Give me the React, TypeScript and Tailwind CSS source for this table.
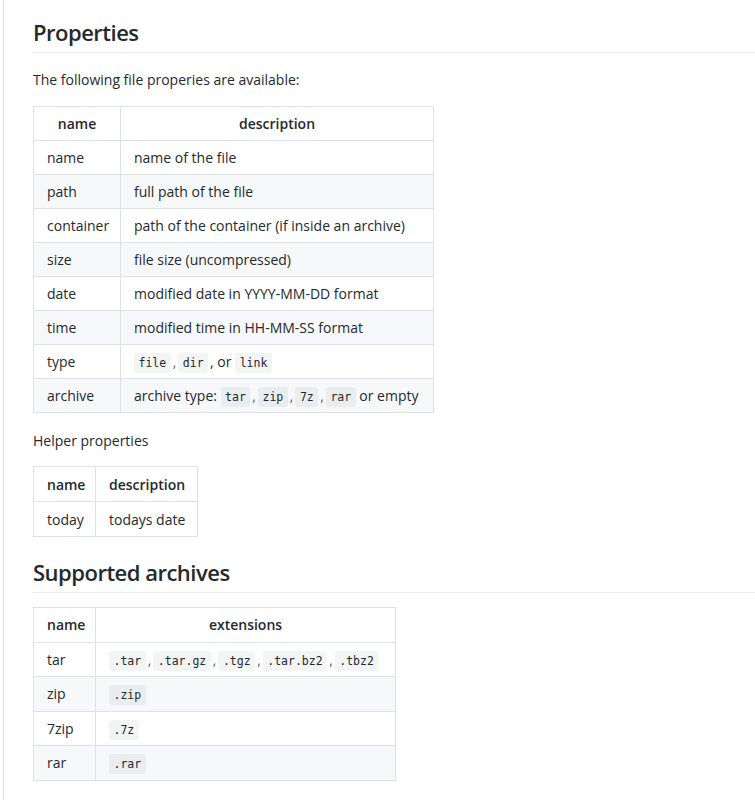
const font = "font-['Segoe_UI','Open_Sans','Noto_Sans',sans-serif]"

interface Row {
  name: string
  desc: React.ReactNode
}

function Code({ children }: { children: React.ReactNode }) {
  return (
    <code className="rounded-[3px] bg-[#1b1f230d] px-[4.5px] py-[3px] font-['DejaVu_Sans_Mono','Liberation_Mono',monospace] text-[11.5px]">
      {children}
    </code>
  )
}

function Sep() {
  return <span className="mx-[2px] text-[#586069]">,</span>
}

function DataTable({
  cols,
  tableWidth,
  firstCol,
  rowHeight,
  rows,
}: {
  cols: string[]
  tableWidth: string
  firstCol: string
  rowHeight: string
  rows: Row[]
}) {
  return (
    <table className={`${tableWidth} table-fixed border-collapse text-[14px]`}>
      <colgroup>
        <col className={firstCol} />
        <col />
      </colgroup>
      <thead>
        <tr>
          {cols.map((c) => (
            <th key={c} className={`${rowHeight} border border-[#dfe2e5] px-[13px] py-0 text-center font-semibold`}>
              {c}
            </th>
          ))}
        </tr>
      </thead>
      <tbody>
        {rows.map((r, i) => (
          <tr key={r.name} className={i % 2 === 1 ? "bg-[#f6f8fa]" : "bg-white"}>
            <td className={`${rowHeight} border border-[#dfe2e5] px-[13px] py-0 whitespace-nowrap`}>{r.name}</td>
            <td className="border border-[#dfe2e5] px-[13px] py-0 whitespace-nowrap">{r.desc}</td>
          </tr>
        ))}
      </tbody>
    </table>
  )
}

export default function App() {
  const props: Row[] = [
    { name: "name", desc: "name of the file" },
    { name: "path", desc: "full path of the file" },
    { name: "container", desc: "path of the container (if inside an archive)" },
    { name: "size", desc: "file size (uncompressed)" },
    { name: "date", desc: "modified date in YYYY-MM-DD format" },
    { name: "time", desc: "modified time in HH-MM-SS format" },
    {
      name: "type",
      desc: (
        <>
          <Code>file</Code>
          <Sep />
          <Code>dir</Code>
          <span className="ml-[2px]">, or </span>
          <Code>link</Code>
        </>
      ),
    },
    {
      name: "archive",
      desc: (
        <>
          archive type: <Code>tar</Code>
          <Sep />
          <Code>zip</Code>
          <Sep />
          <Code>7z</Code>
          <Sep />
          <Code>rar</Code> or empty
        </>
      ),
    },
  ]

  const archives: Row[] = [
    {
      name: "tar",
      desc: (
        <>
          <Code>.tar</Code>
          <Sep />
          <Code>.tar.gz</Code>
          <Sep />
          <Code>.tgz</Code>
          <Sep />
          <Code>.tar.bz2</Code>
          <Sep />
          <Code>.tbz2</Code>
        </>
      ),
    },
    { name: "zip", desc: <Code>.zip</Code> },
    { name: "7zip", desc: <Code>.7z</Code> },
    { name: "rar", desc: <Code>.rar</Code> },
  ]

  return (
    <div className={`${font} flex min-h-[800px] overflow-hidden bg-white text-[#24292e]`}>
      {/* left rule of the page frame */}
      <div className="ml-[3px] w-px shrink-0 bg-[#dcdfe3]" />
      <div className="min-w-0 flex-1 pl-[29px] pt-[18px]">
        <h2 className="border-b border-[#eaecef] pb-[5px] text-[22px] leading-[29px] font-semibold tracking-[-0.5px]">
          Properties
        </h2>

        <p className="mt-[16px] text-[14px] leading-[21px]">The following file properies are available:</p>

        <div className="mt-[16px]">
          <DataTable
            cols={["name", "description"]}
            tableWidth="w-[401px]"
            firstCol="w-[87px]"
            rowHeight="h-[34px]"
            rows={props}
          />
        </div>

        <p className="mt-[17px] text-[14px] leading-[21px]">Helper properties</p>

        <div className="mt-[15px]">
          <DataTable
            cols={["name", "description"]}
            tableWidth="w-[165px]"
            firstCol="w-[62px]"
            rowHeight="h-[35px]"
            rows={[{ name: "today", desc: "todays date" }]}
          />
        </div>

        <h2 className="mt-[21px] border-b border-[#eaecef] pb-[5px] text-[22px] leading-[29px] font-semibold tracking-[-0.5px]">
          Supported archives
        </h2>

        <div className="mt-[14px]">
          <DataTable
            cols={["name", "extensions"]}
            tableWidth="w-[363px]"
            firstCol="w-[62px]"
            rowHeight="h-[34.5px]"
            rows={archives}
          />
        </div>
      </div>
    </div>
  )
}
